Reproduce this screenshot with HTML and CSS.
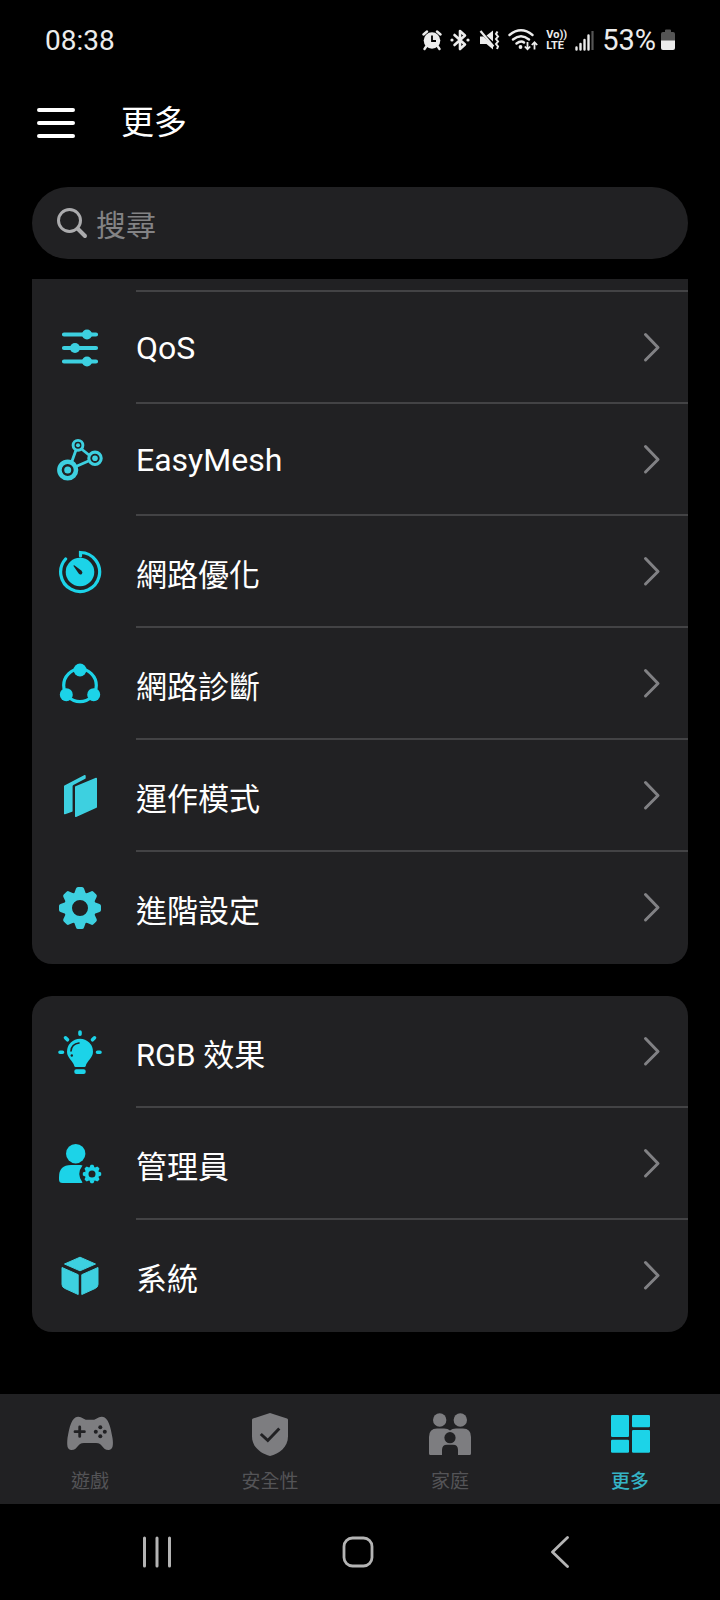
FILE: index.html
```html
<!DOCTYPE html>
<html lang="zh-Hant">
<head>
<meta charset="utf-8">
<meta name="viewport" content="width=device-width, initial-scale=1">
<title>更多</title>
<link rel="stylesheet" href="styles.css">
</head>
<body>
<svg class="defs" aria-hidden="true">
  <symbol id="chevron" viewBox="0 0 20 32"><path d="M3.500 3.500 16 16.500 3.500 29" fill="none" stroke="currentColor" stroke-width="3" stroke-linecap="round" stroke-linejoin="round"/></symbol>
  <symbol id="gear" viewBox="0 0 48 48">
    <circle cx="24" cy="24" r="12" fill="none" stroke="currentColor" stroke-width="8"/>
    <g fill="currentColor">
      <path id="tooth" d="M18 10 20 4.500Q20.500 3 22 3H26Q27.500 3 28 4.500L30 10Z"/>
      <use href="#tooth" transform="rotate(45 24 24)"/><use href="#tooth" transform="rotate(90 24 24)"/>
      <use href="#tooth" transform="rotate(135 24 24)"/><use href="#tooth" transform="rotate(180 24 24)"/>
      <use href="#tooth" transform="rotate(225 24 24)"/><use href="#tooth" transform="rotate(270 24 24)"/>
      <use href="#tooth" transform="rotate(315 24 24)"/>
    </g>
  </symbol>
</svg>

<div class="screen">
  <div class="status">
    <span class="clock">08:38</span>
    <div class="indicators">
      <svg width="20" height="22" viewBox="0 0 20 22"><circle cx="10" cy="11.500" r="8.300" fill="currentColor"/><path d="M1.500 5.500 5 2.500M18.500 5.500 15 2.500M4.500 17 2.500 20M15.500 17l2 3" stroke="currentColor" stroke-width="2.400" stroke-linecap="round"/><path d="M10 6.500V12h4" fill="none" stroke="#000" stroke-width="1.800"/></svg>
      <svg width="20" height="22" viewBox="0 0 20 22"><path d="M4.500 6 15 15.500 10 20V2l5 4.500L4.500 16" fill="none" stroke="currentColor" stroke-width="2.600" stroke-linejoin="round" stroke-linecap="round"/><circle cx="2" cy="11" r="1.600" fill="currentColor"/><circle cx="18" cy="11" r="1.600" fill="currentColor"/></svg>
      <svg width="22" height="22" viewBox="0 0 22 22"><path d="M2 7.500H5.500L15 17V20.500L8.500 15H2ZM8.500 6.500 15 1.500V12.500Z" fill="currentColor"/><path d="M2.500 2 15.500 17.500" stroke="currentColor" stroke-width="2.200"/><path d="M19.500 2.500 18 5l2 2.500L18 10l2 2.500L18 15l2 2.500-1 2.500" fill="none" stroke="currentColor" stroke-width="2"/></svg>
      <svg width="30" height="22" viewBox="0 0 30 22"><g fill="none" stroke="currentColor" stroke-width="2.400" stroke-linecap="round"><path d="M1.500 6Q13 -3.500 24.500 6M5 10.500Q13 4 21 10.500M8.500 14.500Q13 11 16 13.500"/></g><circle cx="12.500" cy="18" r="1.900" fill="currentColor"/><path d="M19.500 13V20M16.800 17.500l2.700 2.800 2.700-2.800M26.500 20.500V13.500M23.800 16l2.700-2.800 2.700 2.800" fill="none" stroke="currentColor" stroke-width="1.800"/></svg>
      <span class="volte"><span>Vo))</span><span>LTE</span></span>
      <svg width="19" height="22" viewBox="0 0 19 22"><path d="M1.500 20.500V18.500M5.500 20.500V15M9.500 20.500V11M13.500 20.500V6.500" stroke="currentColor" stroke-width="2.400" stroke-linecap="round"/><path d="M17.500 21V2" stroke="#555" stroke-width="2.200"/></svg>
      <span class="percent">53%</span>
      <svg class="battery" width="16" height="22" viewBox="0 0 16 22"><path d="M1 12V5Q1 3 3 3H5V1.500Q5 .5 6 .5H10Q11 .5 11 1.500V3H13Q15 3 15 5V12Z" fill="#555"/><path d="M1 11.500H15V19Q15 21 13 21H3Q1 21 1 19Z" fill="currentColor"/></svg>
    </div>
  </div>

  <header class="header">
    <button class="menu" aria-label="選單"><svg width="38" height="32" viewBox="0 0 38 32"><path d="M2 3H36M2 16H36M2 29H36" stroke="currentColor" stroke-width="4" stroke-linecap="round"/></svg></button>
    <h1 class="title">更多</h1>
  </header>

  <label class="search">
    <svg width="32" height="32" viewBox="0 0 32 32"><circle cx="13.500" cy="13.500" r="11" fill="none" stroke="currentColor" stroke-width="3"/><path d="M21.500 21.500 29 29" stroke="currentColor" stroke-width="4" stroke-linecap="round"/></svg>
    <input class="search-input" type="search" placeholder="搜尋" aria-label="搜尋">
  </label>

  <main class="content">
    <nav class="card card-scrolled">
      <a class="row" href="#qos">
        <svg class="icon" viewBox="0 0 48 48"><path d="M8 11.500H40M8 25H40M8 38.500H40" stroke="currentColor" stroke-width="4.200" stroke-linecap="round"/><g fill="currentColor"><circle cx="31" cy="11.500" r="5"/><circle cx="19" cy="25" r="5"/><circle cx="31" cy="38.500" r="5"/></g></svg>
        <span class="line"><span class="label latin">QoS</span><svg class="chevron"><use href="#chevron"/></svg></span>
      </a>
      <a class="row" href="#easymesh">
        <svg class="icon" viewBox="0 0 48 48"><g fill="none" stroke="currentColor"><path d="M15.500 27.500 20 15M25.500 14 33 20M20 31.500 32.500 26" stroke-width="2.800"/><circle cx="11.700" cy="35" r="8.300" stroke-width="4.600"/><circle cx="22" cy="10.300" r="4.900" stroke-width="2.900"/><circle cx="39" cy="23.300" r="6.200" stroke-width="3.100"/></g><g fill="currentColor"><circle cx="11.700" cy="35" r="3.500"/><circle cx="22" cy="10.300" r="2"/><circle cx="39" cy="23.300" r="2.800"/></g></svg>
        <span class="line"><span class="label latin">EasyMesh</span><svg class="chevron"><use href="#chevron"/></svg></span>
      </a>
      <a class="row" href="#optimize">
        <svg class="icon bright" viewBox="0 0 48 48"><circle cx="24" cy="25" r="14.300" fill="currentColor"/><path d="M9.600 12A19.500 19.500 0 1 0 24.500 5.500V9" fill="none" stroke="currentColor" stroke-width="3.200" stroke-linecap="round"/><path d="M17.300 18.800Q17.800 18 18.600 18.400L25.600 23.700Q27.200 25.500 25.800 27Q24.200 28.200 22.700 26.600Z" fill="#212123"/></svg>
        <span class="line"><span class="label">網路優化</span><svg class="chevron"><use href="#chevron"/></svg></span>
      </a>
      <a class="row" href="#diagnose">
        <svg class="icon bright" viewBox="0 0 48 48"><circle cx="24" cy="26.300" r="16.300" fill="none" stroke="currentColor" stroke-width="3.200"/><g fill="currentColor"><circle cx="24" cy="11" r="6.500"/><circle cx="10.300" cy="35.700" r="6.500"/><circle cx="37.700" cy="35.700" r="6.500"/></g></svg>
        <span class="line"><span class="label">網路診斷</span><svg class="chevron"><use href="#chevron"/></svg></span>
      </a>
      <a class="row" href="#mode">
        <svg class="icon" viewBox="0 0 48 48"><g fill="currentColor" stroke="currentColor" stroke-linejoin="round" stroke-width="1.600"><path d="M8.800 15.200 28.900 4.800V7L17 13.200Q15.800 13.900 15.800 15.200V40L8.800 42.500Z"/><path d="M19.800 16 40.200 7.500V36L19.800 45.200Z"/></g></svg>
        <span class="line"><span class="label">運作模式</span><svg class="chevron"><use href="#chevron"/></svg></span>
      </a>
      <a class="row" href="#advanced">
        <svg class="icon"><use href="#gear"/></svg>
        <span class="line"><span class="label">進階設定</span><svg class="chevron"><use href="#chevron"/></svg></span>
      </a>
    </nav>

    <nav class="card">
      <a class="row" href="#rgb">
        <svg class="icon bright" viewBox="0 0 48 48"><path d="M24 11.700A13 13 0 0 0 11 24.700C11 31 17 33.500 18.300 39Q18.500 40 19.500 40H28.500Q29.500 40 29.700 39C31 33.500 37 31 37 24.700A13 13 0 0 0 24 11.700Z" fill="currentColor"/><rect x="18.300" y="42.300" width="11.400" height="4.700" rx="2" fill="currentColor"/><path d="M24 5V7.300M4 25.300H6.500M41.500 25.300H44M9.500 10.800 11.500 12.800M38.500 10.800 36.500 12.800" stroke="currentColor" stroke-width="3.600" stroke-linecap="round"/><path d="M23 16Q15.500 17 15 24" fill="none" stroke="#212123" stroke-width="1.600" stroke-linecap="round"/><circle cx="15.800" cy="28.500" r="1.200" fill="#212123"/></svg>
        <span class="line"><span class="label">RGB 效果</span><svg class="chevron"><use href="#chevron"/></svg></span>
      </a>
      <a class="row" href="#admin">
        <svg class="icon bright" viewBox="0 0 48 48"><circle cx="19.700" cy="14.700" r="9.700" fill="currentColor"/><path d="M3 38Q3 26 15 26H24.500Q25.500 26 26.500 26.500Q20 35 26.500 43.500Q25.500 44 24.500 44H6.500Q3 44 3 40.500Z" fill="currentColor"/><use href="#gear" x="25.500" y="24.500" width="21" height="21"/></svg>
        <span class="line"><span class="label">管理員</span><svg class="chevron"><use href="#chevron"/></svg></span>
      </a>
      <a class="row" href="#system">
        <svg class="icon" viewBox="0 0 48 48"><g fill="currentColor" stroke="currentColor" stroke-linejoin="round" stroke-width="1"><path d="M24 5.200 39.500 12 24 18.800 8.500 12Z"/><path d="M6 15.500 22.200 22.700V42.500L9 36.500Q6 35.200 6 32.500Z"/><path d="M42 15.500 25.800 22.700V42.500L39 36.500Q42 35.200 42 32.500Z"/></g></svg>
        <span class="line"><span class="label">系統</span><svg class="chevron"><use href="#chevron"/></svg></span>
      </a>
    </nav>
  </main>

  <nav class="tabs">
    <a class="tab" href="#games">
      <svg class="tab-icon" viewBox="0 0 48 48"><path d="M12 7.700C16 7.500 17.500 10.700 21 10.700H27C30.500 10.700 32 7.500 36 7.700C42.500 8 44.500 18 46.500 29C47.500 36 47 41 42.500 41C36 41 37 34 30 34H18C11 34 12 41 5.500 41C1 41 .8 36 1.500 29C3.500 18 5.500 8 12 7.700Z" fill="currentColor"/><path d="M13.700 18V27.400M9 22.700H18.400" stroke="#212123" stroke-width="2.800" stroke-linecap="round"/><g fill="#212123"><circle cx="34.300" cy="18.200" r="2"/><circle cx="34.300" cy="27.200" r="2"/><circle cx="29.800" cy="22.700" r="2"/><circle cx="38.800" cy="22.700" r="2"/></g></svg>
      <span class="tab-label">遊戲</span>
    </a>
    <a class="tab" href="#security">
      <svg class="tab-icon" viewBox="0 0 48 48"><path d="M24 4 41 9.600Q42 10 42 11V27.500C42 38 33 45 24 47C15 45 6 38 6 27.500V11Q6 10 7 9.600Z" fill="currentColor"/><path d="M14.800 25 21.800 31.500 33.300 19.500" fill="none" stroke="#212123" stroke-width="3"/></svg>
      <span class="tab-label">安全性</span>
    </a>
    <a class="tab" href="#family">
      <svg class="tab-icon" viewBox="0 0 48 48"><circle cx="13.700" cy="11" r="6.700" fill="currentColor"/><circle cx="34.300" cy="11" r="6.700" fill="currentColor"/><path d="M11 19.500H18Q22 19.500 24 21.500Q26 19.500 30 19.500H37Q45 19.500 45 28V44.500Q45 46 43.500 46H32V41Q32 35.700 27 35.700H21Q16 35.700 16 41V46H4.500Q3 46 3 44.500V28Q3 19.500 11 19.500Z" fill="currentColor"/><circle cx="24" cy="28.700" r="5.600" fill="#212123"/></svg>
      <span class="tab-label">家庭</span>
    </a>
    <a class="tab tab-active" href="#more" aria-current="page">
      <svg class="tab-icon" viewBox="0 0 48 48"><g fill="currentColor"><rect x="5" y="6" width="18" height="22" rx="1.300"/><rect x="5" y="30.700" width="18" height="13" rx="1.300"/><rect x="26" y="6" width="18" height="12.300" rx="1.300"/><rect x="26" y="21" width="18" height="22.700" rx="1.300"/></g></svg>
      <span class="tab-label">更多</span>
    </a>
  </nav>

  <div class="system-nav">
    <button class="system-button" aria-label="最近使用"><svg width="32" height="32" viewBox="0 0 32 32"><path d="M3.500 2V30M16 2V30M28.500 2V30" stroke="currentColor" stroke-width="3" stroke-linecap="round"/></svg></button>
    <button class="system-button" aria-label="主畫面"><svg width="32" height="32" viewBox="0 0 32 32"><rect x="2" y="2" width="28" height="28" rx="8.500" fill="none" stroke="currentColor" stroke-width="2.800"/></svg></button>
    <button class="system-button" aria-label="返回"><svg width="32" height="32" viewBox="0 0 32 32"><path d="M24.500 1.500 9.500 16 24.500 30.500" fill="none" stroke="currentColor" stroke-width="2.800" stroke-linecap="round" stroke-linejoin="round"/></svg></button>
  </div>
</div>
</body>
</html>
```
FILE: styles.css
```css
* {
  box-sizing: border-box;
}

body {
  margin: 0;
  background: #000;
  color: #fff;
  font-family: Roboto, "Noto Sans CJK TC", sans-serif;
}

a {
  color: inherit;
  text-decoration: none;
}

button {
  display: flex;
  padding: 0;
  border: 0;
  background: none;
  color: inherit;
}

svg {
  display: block;
  flex: none;
}

.defs {
  position: absolute;
  width: 0;
  height: 0;
}

.screen {
  display: flex;
  flex-direction: column;
  min-height: 100vh;
}

.status {
  display: flex;
  align-items: center;
  justify-content: space-between;
  height: 80px;
  padding: 0 44px 0 45px;
  color: #ececec;
  font-size: 28px;
}

.indicators {
  display: flex;
  align-items: center;
  gap: 8px;
}

.volte {
  display: flex;
  flex-direction: column;
  font-size: 11px;
  font-weight: 700;
  line-height: 11px;
}

.percent {
  font-size: 29px;
}

.battery {
  margin-left: -4px;
}

.header {
  display: flex;
  align-items: center;
  gap: 46px;
  height: 86px;
  padding: 0 37px;
}

.title {
  margin: 0;
  font-size: 33px;
  font-weight: 400;
  line-height: 40px;
}

.search {
  display: flex;
  align-items: center;
  gap: 8px;
  height: 72px;
  margin: 21px 32px 20px;
  padding: 0 24px;
  border-radius: 36px;
  background: #212123;
  color: #ababad;
}

.search-input {
  flex: 1;
  min-width: 0;
  padding: 5px 0 0;
  border: 0;
  outline: 0;
  background: none;
  color: #fff;
  font: inherit;
  font-size: 30px;
}

.search-input::placeholder {
  color: #838385;
}

.content {
  display: flex;
  flex: 1;
  flex-direction: column;
  gap: 32px;
  padding: 0 32px 32px;
}

.card {
  overflow: hidden;
  border-radius: 20px;
  background: #212123;
}

.card-scrolled {
  padding-top: 11px;
  border-radius: 0 0 20px 20px;
}

.row {
  display: flex;
  align-items: stretch;
  gap: 32px;
  height: 112px;
  padding-left: 24px;
}

.card-scrolled .row:first-child {
  height: 114px;
}

.card-scrolled .row:first-child .line {
  border-top: 2px solid #434345;
}

.icon {
  align-self: center;
  width: 48px;
  height: 48px;
  margin-bottom: 2px;
  color: #3dd0e0;
}

.card-scrolled .row:first-child .icon,
.row:last-child .icon {
  margin-bottom: 0;
}

.bright {
  color: #1cd3e8;
}

.line {
  display: flex;
  flex: 1;
  align-items: center;
  justify-content: space-between;
  padding-right: 26px;
  border-bottom: 2px solid #434345;
}

.row:last-child .line {
  border-bottom-color: transparent;
}

.label {
  padding-top: 2px;
  font-size: 31px;
}

.latin {
  font-size: 32px;
}

.chevron {
  width: 20px;
  height: 32px;
  color: #818184;
}

.tabs {
  display: grid;
  grid-template-columns: repeat(4, 1fr);
  height: 110px;
  background: #212123;
  color: #7d7d80;
}

.tab {
  display: flex;
  flex-direction: column;
  align-items: center;
  gap: 11px;
  padding-top: 15px;
}

.tab-icon {
  width: 48px;
  height: 48px;
}

.tab-label {
  color: #545457;
  font-size: 19px;
  line-height: 28px;
}

.tab-active {
  color: #1cd3e8;
}

.tab-active .tab-label {
  color: #35b4c6;
  font-weight: 500;
}

.system-nav {
  display: grid;
  grid-template-columns: repeat(3, 1fr);
  align-items: center;
  justify-items: center;
  height: 96px;
  padding: 0 60px 0 56px;
  color: #b4b4b4;
}
```
